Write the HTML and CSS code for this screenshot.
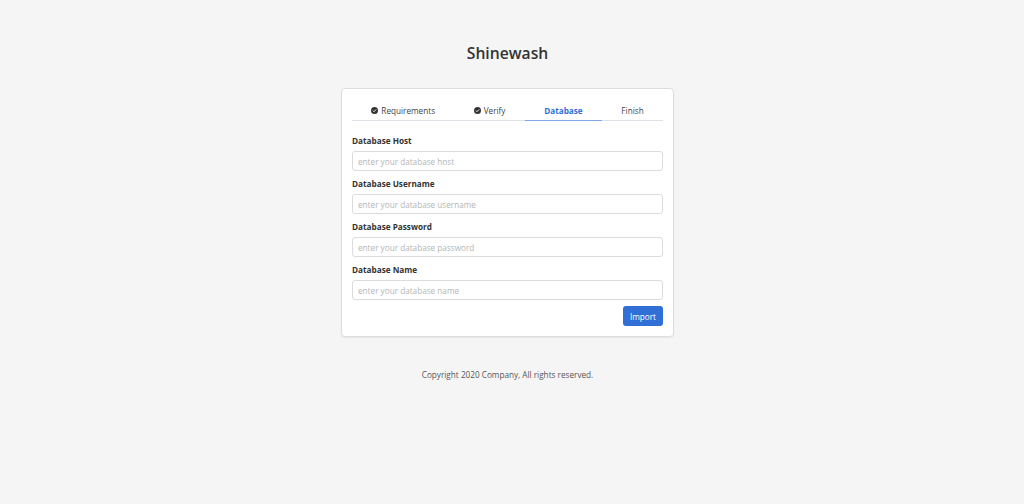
FILE: index.html
```html
<!DOCTYPE html>
<html lang="en">
<head>
    <meta charset="UTF-8">
    <meta name="viewport" content="width=device-width, initial-scale=1.0">
    <title>Shinewash - Install</title>
    <link rel="stylesheet" href="styles.css">
</head>
<body>
    <div class="wrapper">
        <h1 class="brand">Shinewash</h1>

        <div class="card">
            <ul class="steps">
                <li class="step done">
                    <svg class="check" viewBox="0 0 16 16"><circle cx="8" cy="8" r="8" fill="#333"/><path d="M4.3 8.3l2.4 2.4 5-5" fill="none" stroke="#fff" stroke-width="2.2"/></svg>
                    Requirements
                </li>
                <li class="step done">
                    <svg class="check" viewBox="0 0 16 16"><circle cx="8" cy="8" r="8" fill="#333"/><path d="M4.3 8.3l2.4 2.4 5-5" fill="none" stroke="#fff" stroke-width="2.2"/></svg>
                    Verify
                </li>
                <li class="step active">Database</li>
                <li class="step">Finish</li>
            </ul>

            <form class="db-form">
                <div class="field">
                    <label for="db-host">Database Host</label>
                    <input type="text" id="db-host" placeholder="enter your database host">
                </div>
                <div class="field">
                    <label for="db-user">Database Username</label>
                    <input type="text" id="db-user" placeholder="enter your database username">
                </div>
                <div class="field">
                    <label for="db-pass">Database Password</label>
                    <input type="password" id="db-pass" placeholder="enter your database password">
                </div>
                <div class="field">
                    <label for="db-name">Database Name</label>
                    <input type="text" id="db-name" placeholder="enter your database name">
                </div>
                <div class="actions">
                    <button type="button" class="btn-import">Import</button>
                </div>
            </form>
        </div>

        <p class="copyright">Copyright 2020 Company, All rights reserved.</p>
    </div>
</body>
</html>
```

FILE: styles.css
```css
/* base */
body {
    font-family: "Open Sans", "Noto Sans", sans-serif;
    margin: 0;
    padding: 0 9px 0 0; /* page is centred as if a scrollbar were there */
    background-color: #f5f5f5;
    color: #333;
}
.wrapper {
    width: 333px;
    margin: 0 auto;
    padding-top: 41px;
}
.brand {
    margin: 0 0 23px;
    text-align: center;
    font-size: 15.7px;
    font-weight: 600;
    line-height: 24px;
    color: #333;
}
.card {
    background-color: #fff;
    border: 1px solid #ddd;
    border-radius: 4px;
    box-shadow: 0 1px 2px rgba(0, 0, 0, 0.06);
    padding: 11px 10px 10px;
}
/* step tabs */
.steps {
    display: flex;
    list-style: none;
    margin: 0;
    padding: 0;
    border-bottom: 1px solid #dee2e6;
}
.step {
    flex: 1 1 auto;
    display: flex;
    justify-content: center;
    align-items: center;
    gap: 3px;
    height: 20px;
    padding: 0 16px;
    font-size: 8.2px;
    color: #444;
    margin-bottom: -1px;
    border-bottom: 1px solid transparent;
}
.step.active {
    color: #2f6fd6;
    font-weight: 700;
    border-bottom-color: #7ea6e6;
}
.check {
    width: 7px;
    height: 7px;
}
/* form */
.db-form {
    padding-top: 14px;
}
.field {
    margin-bottom: 7px;
}
.field label {
    display: block;
    font-size: 8.2px;
    font-weight: 700;
    line-height: 11px;
    margin-bottom: 5px;
    color: #333;
}
.field input {
    display: block;
    width: 100%;
    box-sizing: border-box;
    height: 20px;
    padding: 0 5px;
    border: 1px solid #dcdcdc;
    border-radius: 3px;
    font-family: inherit;
    font-size: 8.2px;
    color: #333;
}
.field input::placeholder {
    color: #b5b5b5;
}
.actions {
    display: flex;
    justify-content: flex-end;
    margin-top: -1px;
}
.btn-import {
    background-color: #2f6fd6;
    color: #fff;
    border: none;
    border-radius: 3px;
    height: 20px;
    padding: 0 7px;
    font-family: inherit;
    font-size: 8.2px;
    cursor: pointer;
}
.copyright {
    text-align: center;
    font-size: 8.2px;
    line-height: 12px;
    color: #555;
    margin: 32px 0 0;
}
```
